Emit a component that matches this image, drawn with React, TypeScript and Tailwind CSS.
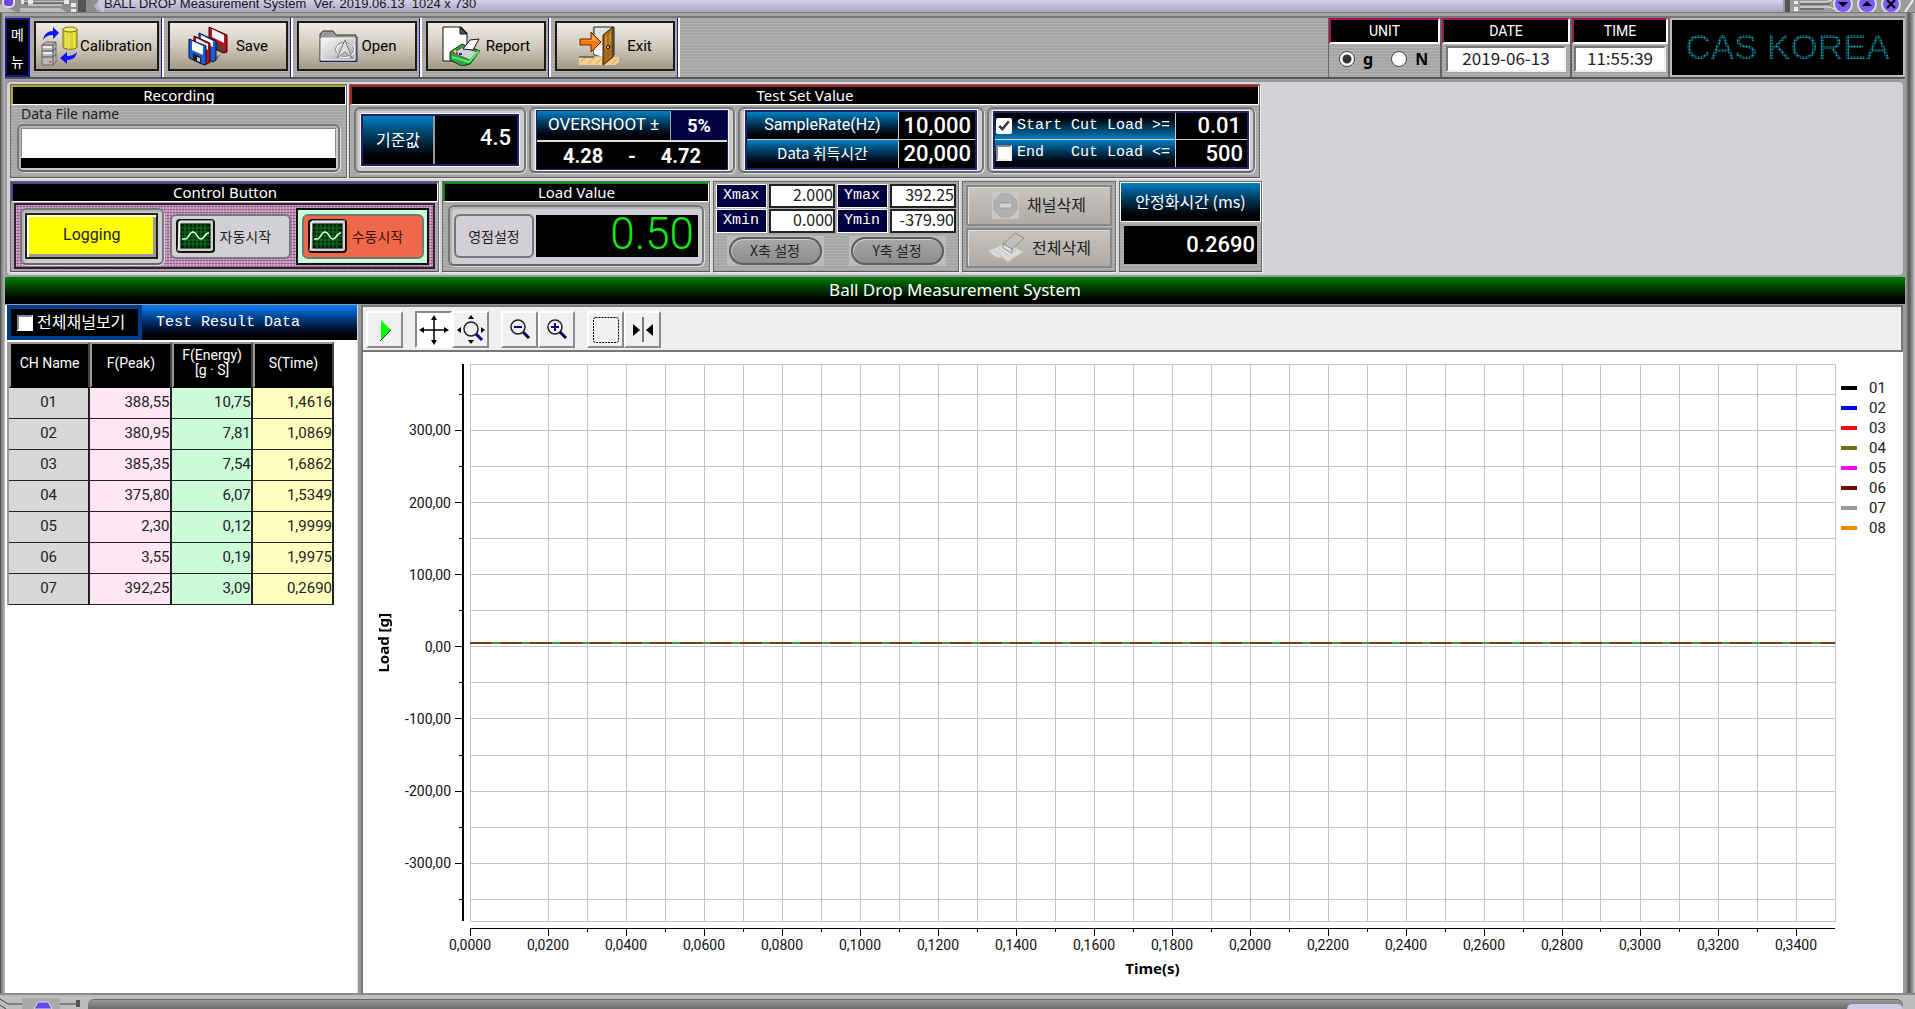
import type { ReactNode } from "react";
import clsx from "clsx";

const stripes =
  "bg-[repeating-linear-gradient(180deg,#a6a6a6_0px,#a6a6a6_2px,#b2b2b2_2px,#b2b2b2_3px)]";
const blueFade = "bg-linear-to-b from-[#0080c4] to-black";
const numberFont = "font-['Roboto','Noto_Sans_CJK_KR',sans-serif]";
const monoFont = "font-['Liberation_Mono','Noto_Sans_CJK_KR',monospace]";

const results = [
  { ch: "01", peak: "388,55", energy: "10,75", time: "1,4616" },
  { ch: "02", peak: "380,95", energy: "7,81", time: "1,0869" },
  { ch: "03", peak: "385,35", energy: "7,54", time: "1,6862" },
  { ch: "04", peak: "375,80", energy: "6,07", time: "1,5349" },
  { ch: "05", peak: "2,30", energy: "0,12", time: "1,9999" },
  { ch: "06", peak: "3,55", energy: "0,19", time: "1,9975" },
  { ch: "07", peak: "392,25", energy: "3,09", time: "0,2690" },
];

const legend = [
  { name: "01", color: "bg-black" },
  { name: "02", color: "bg-[#0000f0]" },
  { name: "03", color: "bg-[#f00c0c]" },
  { name: "04", color: "bg-[#74740c]" },
  { name: "05", color: "bg-[#f00cf0]" },
  { name: "06", color: "bg-[#780808]" },
  { name: "07", color: "bg-[#9a9a9a]" },
  { name: "08", color: "bg-[#ff840c]" },
];

/* ---------- icons ---------- */

function CalibrationIcon() {
  return (
    <svg width="38" height="40" viewBox="0 0 38 40">
      <path d="M1 19l4-3h10v20l-3 3H1z" fill="#b9b9b9" stroke="#666" />
      <path d="M1 19h11v20M12 19l3-3M1 25h11l3-3M1 31h11l3-3" fill="none" stroke="#555" />
      <path d="M2 20h9v2H2zM2 26h9v2H2z" fill="#eee" />
      <circle cx="9" cy="36" r="1" fill="#e33" />
      <path d="M22 3v18c0 3 14 3 14 0V3z" fill="#d9d22a" stroke="#77700a" />
      <path d="M25 5v17M28 5v18M33 5v17" stroke="#f8f580" />
      <ellipse cx="29" cy="3.500" rx="7" ry="2.500" fill="#f4f06a" stroke="#77700a" />
      <path d="M2 14c1-6 5-9 10-9V1l6 6-6 6V9c-4 0-7 1-10 5z" fill="#0a14ff" />
      <path d="M36 26c-1 6-5 8-10 8v4l-7-6 7-6v4c4 0 7-1 10-4z" fill="#0a14ff" />
    </svg>
  );
}

function SaveIcon() {
  return (
    <svg width="41" height="40" viewBox="0 0 41 40">
      <path d="M22 33l11-5-4 6-8 4z" fill="#555" opacity=".5" />
      <path d="M21 1l18 8v17l-4 1-14-7z" fill="#b5121b" stroke="#300" />
      <path d="M24 3l12 6v8l-12-6z" fill="#f4f4f4" />
      <path d="M28 17l7 4v5l-7-4z" fill="#444" />
      <path d="M11 7l17 8v19l-3 2-14-8z" fill="#1c5fd4" stroke="#001040" />
      <path d="M13 9l12 6v6l-12-6z" fill="#fff" />
      <path d="M6 10l16 7v19l-3 2-13-8z" fill="#b5121b" stroke="#300" />
      <path d="M8 12l12 6v6L8 18z" fill="#eee" />
      <path d="M1 13l17 7v19l-4-1L1 32z" fill="#1c5fd4" stroke="#001040" />
      <path d="M4 15l11 5v9L4 24z" fill="#fff" />
      <path d="M5 27l8 4v7l-8-4z" fill="#222" />
      <path d="M9 31l3 1v4l-3-1z" fill="#ccc" />
    </svg>
  );
}

function OpenIcon() {
  return (
    <svg width="40" height="34" viewBox="0 0 40 34">
      <defs>
        <linearGradient id="folder" x1="0" y1="0" x2="1" y2="1">
          <stop offset="0" stopColor="#fafafa" />
          <stop offset="1" stopColor="#a8a8a8" />
        </linearGradient>
      </defs>
      <path d="M2 32V5l3-3h10l3 4h20v26z" fill="#999" stroke="#333" />
      <path d="M3 9h34v22H3z" fill="url(#folder)" stroke="#f4f4f4" />
      <path d="M2 32.500h37V8" fill="none" stroke="#24247a" />
      <ellipse cx="27" cy="21" rx="9" ry="7" fill="none" stroke="#fff" strokeWidth="2" />
      <ellipse cx="26.500" cy="20.500" rx="9" ry="7" fill="none" stroke="#777" />
      <path d="M27 11l7 18-7-6-8 6z" fill="#ddd" stroke="#777" />
    </svg>
  );
}

function ReportIcon() {
  return (
    <svg width="40" height="40" viewBox="0 0 40 40">
      <path d="M1 1h18l6 6v28H1z" fill="#fff" stroke="#111" />
      <path d="M18 1v7h7z" fill="#555" stroke="#111" />
      <path d="M8 26l12-8 18 7-10 13-8 2-12-6z" fill="#37a04a" stroke="#0a3010" />
      <path d="M11 27l10-6 14 5-7 8z" fill="#cfd3cf" stroke="#555" />
      <path d="M21 23l7-9 9-1-6 11z" fill="#fff" stroke="#111" />
      <path d="M10 31l17 5 10-11" fill="none" stroke="#48f058" strokeWidth="2" />
      <path d="M14 26h2v2h-2z" fill="#e22" />
      <path d="M17 27h3v2h-3z" fill="#22e" />
      <path d="M12 24h2v2h-2z" fill="#ee2" />
    </svg>
  );
}

function ExitIcon() {
  return (
    <svg width="42" height="40" viewBox="0 0 42 40">
      <path d="M1 31h40v5l-4 3H1z" fill="#f3cf94" />
      <path d="M3 36l5-5M10 38l7-7M18 38l5-5M34 38l5-6" stroke="#d9a050" />
      <path d="M1 31h15" stroke="#222" />
      <path d="M14 1h23v30H16z" fill="#aaa" opacity=".5" />
      <path d="M16 1h20v28H16z" fill="#dfe0e0" stroke="#222" />
      <path d="M16 24l9-5v12l-9-3z" fill="#f6f6f6" />
      <path d="M25 9l10-8v30l-10 8z" fill="#a2691c" stroke="#2b1800" />
      <path d="M27 11l2-2v12l-2 2zM31 8l2-2v11l-2 2z" fill="#c98c34" />
      <circle cx="30" cy="21" r="1.500" fill="#fff" stroke="#000" />
      <path d="M2 13h11V6l10 10-10 10v-7H2z" fill="#ff7b12" stroke="#6b2500" />
      <path d="M3 14h11v-5l5 6z" fill="#ffb64a" />
    </svg>
  );
}

function ScopeIcon() {
  return (
    <svg width="40" height="34" viewBox="0 0 40 34" className="shrink-0">
      <rect x="1" y="1" width="37" height="32" rx="3" fill="#cfcfcf" stroke="#111" strokeWidth="2" />
      <path d="M2 32L4 2h33" fill="none" stroke="#fff" />
      <rect x="5" y="5" width="29" height="24" fill="#042b08" stroke="#000" />
      <path
        d="M9 5v24M13 5v24M17 5v24M21 5v24M25 5v24M29 5v24M5 9h29M5 13h29M5 17h29M5 21h29M5 25h29"
        stroke="#0a7a20"
      />
      <path d="M6 20h3c4 0 4-7 8-7s4 7 8 7 3-6 8-6" fill="none" stroke="#e8ffe8" strokeWidth="1.500" />
    </svg>
  );
}

function StopIcon() {
  return (
    <svg width="27" height="27" viewBox="0 0 27 27">
      <path d="M0 0h27v27H0z" fill="#c9c7c5" />
      <path d="M9 2h9l7 7v9l-7 7H9l-7-7V9z" fill="#b2b0ae" stroke="#a5a3a1" />
      <path d="M7 11h13v5H7z" fill="#d8d6d4" stroke="#999" />
    </svg>
  );
}

function EraserIcon() {
  return (
    <svg width="37" height="31" viewBox="0 0 37 31">
      <path d="M1 19l19-9 16 10-15 10-7-5-4 1z" fill="#dddbd9" stroke="#bbb" />
      <path d="M8 19l9 7M12 17l10 7M16 15l10 7M20 13l10 7" stroke="#b8b6b4" strokeDasharray="2 1" />
      <path d="M16 12L28 1l9 5-12 11z" fill="#c2c0be" stroke="#8f8d8b" />
      <path d="M16 12v4l9 5v-4z" fill="#e8e6e4" stroke="#8f8d8b" />
    </svg>
  );
}

function PlayIcon() {
  return (
    <svg width="28" height="28" viewBox="0 0 28 28">
      <path d="M10 4l10 10-10 10z" fill="#0f0" />
      <path d="M20 14L9 25" stroke="#033" />
    </svg>
  );
}

function PanIcon() {
  return (
    <svg width="30" height="30" viewBox="0 0 30 30">
      <path d="M15 2v26M2 15h26" stroke="#000" strokeWidth="1.500" />
      <path d="M15 0l3 5h-6zM15 30l3-5h-6zM0 15l5-3v6zM30 15l-5-3v6z" />
    </svg>
  );
}

function ZoomFitIcon() {
  return (
    <svg width="30" height="30" viewBox="0 0 30 30">
      <path d="M15 0l3 4h-6zM15 29l3-4h-6zM1 15l4-3v6zM29 15l-4-3v6z" />
      <circle cx="15" cy="14" r="7" fill="none" stroke="#222" strokeWidth="1.500" />
      <path d="M20 19l6 6" stroke="#000080" strokeWidth="3" />
    </svg>
  );
}

function MagnifierIcon({ plus = false }: { plus?: boolean }) {
  return (
    <svg width="26" height="26" viewBox="0 0 26 26">
      <circle cx="11" cy="10" r="7" fill="none" stroke="#222" strokeWidth="1.500" />
      <path d="M16 15l6 6" stroke="#000050" strokeWidth="3" />
      <path d="M7 10h8" stroke="#000090" strokeWidth="2" />
      {plus && <path d="M11 6v8" stroke="#000090" strokeWidth="2" />}
    </svg>
  );
}

function SelectAreaIcon() {
  return (
    <svg width="28" height="28" viewBox="0 0 28 28">
      <rect x="1.500" y="1.500" width="25" height="25" rx="2" fill="none" stroke="#000" strokeDasharray="2 1" />
    </svg>
  );
}

function CursorIcon() {
  return (
    <svg width="24" height="28" viewBox="0 0 24 28">
      <path d="M12 1v25" stroke="#000" />
      <path d="M2 8l7 6-7 6zM22 8l-7 6 7 6z" />
    </svg>
  );
}

/* ---------- building blocks ---------- */

function Panel({
  title,
  edge,
  className,
  children,
}: {
  title?: string;
  edge?: string;
  className?: string;
  children: ReactNode;
}) {
  return (
    <section
      className={clsx(
        "flex flex-col border border-[#6a6a6a] border-b-[#555] shadow-[1px_1px_0_#eee]",
        stripes,
        className
      )}
    >
      {title && (
        <h2
          className={clsx(
            "h-5 shrink-0 border-t-2 border-l-2 border-r border-b border-r-white border-b-white bg-black text-center font-['Noto_Sans',sans-serif] text-[15px] leading-[17px] text-white",
            edge
          )}
        >
          {title}
        </h2>
      )}
      {children}
    </section>
  );
}

function Well({ className, children }: { className?: string; children: ReactNode }) {
  return (
    <div
      className={clsx(
        "flex rounded-md border-2 border-[#777] border-b-[#666] bg-[#cfcdd1] shadow-[inset_2px_2px_0_#b4b4b4,1px_1px_0_#ddd]",
        className
      )}
    >
      {children}
    </div>
  );
}

function BigValue({ className, children }: { className?: string; children: ReactNode }) {
  return (
    <div className={clsx("flex items-center justify-end bg-black text-[22px] leading-6 font-medium text-white", numberFont, className)}>
      {children}
    </div>
  );
}

function MenuButton({ icon, label, className }: { icon: ReactNode; label: string; className?: string }) {
  return (
    <div className={clsx("flex items-start border-r-2 border-white pt-[3px] pr-[3px] pl-1 shadow-[inset_-1px_0_0_#1c1c8c]", className)}>
      <button
        type="button"
        className={clsx(
          "flex h-[50px] w-full items-center justify-center gap-1 border-2 border-[#1c1a16] bg-linear-to-b from-[#efebe4] via-[#d2cbbd] via-50% to-[#a19886] text-[15px] text-black",
          numberFont
        )}
      >
        {icon}
        <span>{label}</span>
      </button>
    </div>
  );
}

function ToolButton({ children, label, active = false, className }: { children: ReactNode; label: string; active?: boolean; className?: string }) {
  return (
    <button
      type="button"
      aria-label={label}
      className={clsx(
        "flex size-[37px] items-center justify-center border-2",
        active
          ? "border-[#8a8a8a] border-r-white border-b-white bg-white"
          : "border-white border-r-[#8a8a8a] border-b-[#8a8a8a] bg-[#f0f0f0]",
        className
      )}
    >
      {children}
    </button>
  );
}

function TitleBar() {
  return (
    <header className="relative flex h-[13px] shrink-0 justify-between overflow-hidden border-b border-[#777] bg-linear-to-b from-[#d3cfe9] to-[#aba7bb]">
      <div className="flex">
        <svg width="104" height="12" viewBox="0 0 104 12">
          <path d="M0 0h100l-6 6 4 6H0z" fill="#8d8d8d" />
          <path d="M0 12V4l16 8zM20 8h40l6 4H20z" fill="#bdbdbd" />
          <rect x="3" y="-6" width="11" height="13" rx="4" fill="#6a48e8" stroke="#ddd" strokeWidth="2" />
          <path d="M22 2h44M28 5h34" stroke="#eee" />
          <path d="M22 3h44" stroke="#444" />
          <path d="M21 0h3v4h-3zM28 0h5v4h-5zM64 0h5v4h-5zM71 3h5v4h-5zM71 9h5v3h-5z" fill="#e9e9e9" />
          <path d="M78 0h8v12h-8z" fill="#555" />
          <path d="M98 0h6v12h-3z" fill="#c9c5dd" />
        </svg>
        <h1 className="-mt-[5px] font-['Liberation_Sans',sans-serif] text-[13px] leading-[17px] whitespace-pre text-[#16161e]">
          BALL DROP Measurement System  Ver. 2019.06.13  1024 x 730
        </h1>
      </div>
      <svg width="132" height="12" viewBox="0 0 132 12">
        <path d="M0 0h132v12H0z" fill="#9c9c9c" />
        <path d="M2 0h5v12H2z" fill="#555" />
        <path d="M11 1h4v3h-4zM11 7h4v4h-4z" fill="#eee" />
        <path d="M17 2h26l6-2M17 7h30l6 3" fill="none" stroke="#eee" />
        <path d="M17 4h30M17 9h24" stroke="#444" />
        <circle cx="60" cy="4" r="9" fill="#7c5cf4" stroke="#ddd" strokeWidth="2" />
        <circle cx="84" cy="4" r="9" fill="#7c5cf4" stroke="#ddd" strokeWidth="2" />
        <circle cx="108" cy="4" r="9" fill="#7c5cf4" stroke="#ddd" strokeWidth="2" />
        <path d="M55 2h10l-5 5zM79 6h10l-5-5z" fill="#000" />
        <path d="M104 0l8 8M112 0l-8 8" stroke="#000" strokeWidth="2" />
        <path d="M122 12l8-12" stroke="#eee" strokeWidth="2" />
      </svg>
    </header>
  );
}

function StatusCell({ title, className, children }: { title: string; className?: string; children: ReactNode }) {
  return (
    <div className={clsx("flex flex-col border-r-2 border-[#666]", className)}>
      <h2 className={clsx("h-[26px] border-2 border-[#a8145c] border-r-white border-b-white bg-black text-center text-sm leading-[22px] text-white", numberFont)}>
        {title}
      </h2>
      {children}
    </div>
  );
}

function TopBar() {
  return (
    <div className={clsx("mt-[3px] flex h-[63px] shrink-0 border-y-2 border-[#555] border-t-[#777]", stripes)}>
      <div className="flex w-[25px] flex-col items-center justify-around border-2 border-[#14148c] bg-black text-sm leading-4 text-white">
        <span>메</span>
        <span>뉴</span>
      </div>
      <MenuButton icon={<CalibrationIcon />} label="Calibration" className="w-[134px] [&_span]:-ml-[3px]" />
      <MenuButton icon={<SaveIcon />} label="Save" className="w-[129px] [&_span]:ml-[3px]" />
      <MenuButton icon={<OpenIcon />} label="Open" className="w-[129px]" />
      <MenuButton icon={<ReportIcon />} label="Report" className="w-[129px]" />
      <MenuButton icon={<ExitIcon />} label="Exit" className="w-[129px] [&_span]:ml-[3px]" />
      <div className="ml-auto flex border-l border-[#666]">
        <StatusCell title="UNIT" className="w-[113px]">
          <div className="flex flex-1 items-center gap-[18px] pb-1 pl-[10px] font-['Noto_Sans',sans-serif] text-base font-bold">
            {["g", "N"].map((unit) => (
              <label key={unit} className="flex items-center gap-2">
                <input
                  type="radio"
                  name="unit"
                  defaultChecked={unit === "g"}
                  className="size-4 appearance-none rounded-full border border-[#444] bg-white checked:bg-[radial-gradient(#333_0,#333_4px,#fff_5px)]"
                />
                {unit}
              </label>
            ))}
          </div>
        </StatusCell>
        <StatusCell title="DATE" className="w-[130px]">
          <input
            aria-label="Date"
            readOnly
            defaultValue="2019-06-13"
            className="mx-1 mt-[2px] h-[26px] w-auto min-w-0 border-2 border-[#777] border-r-[#eee] border-b-[#eee] bg-white pb-1 text-center text-[17px] text-[#222]"
          />
        </StatusCell>
        <StatusCell title="TIME" className="w-[98px]">
          <input
            aria-label="Time"
            readOnly
            defaultValue="11:55:39"
            className="mx-[2px] mt-[2px] h-[26px] w-auto min-w-0 border-2 border-[#777] border-r-[#eee] border-b-[#eee] bg-white pb-1 text-center text-[17px] text-[#222]"
          />
        </StatusCell>
        <div className="flex w-[235px] items-center justify-center border-2 border-[#bbb] bg-black pb-[2px]">
          <span className="bg-[radial-gradient(circle,#18a0a0_25%,#023_70%)] bg-[length:3px_3px] bg-clip-text font-['Liberation_Sans',sans-serif] text-[35px] leading-10 text-transparent">
            CAS KOREA
          </span>
        </div>
      </div>
    </div>
  );
}

function RecordingPanel() {
  return (
    <Panel title="Recording" edge="border-[#b4ac14]" className="w-[337px]">
      <label htmlFor="file" className="h-[19px] pl-[10px] font-['Noto_Sans',sans-serif] text-sm leading-[18px] text-[#222]">
        Data File name
      </label>
      <Well className="mx-[6px] h-[48px] flex-col p-[2px]">
        <input id="file" className="h-[30px] w-full border border-[#888] border-b-2 border-b-white bg-white px-1 text-sm" />
        <div className="h-[10px] bg-black" />
      </Well>
    </Panel>
  );
}

function TestSetPanel() {
  return (
    <Panel title="Test Set Value" edge="border-[#b01c1c]" className="w-[911px]">
      <div className="flex gap-[3px] px-1 pt-[2px]">
        <Well className="h-[66px] w-[172px]">
          <div className="m-auto flex h-[52px] w-[158px] border-2 border-[#20206c] shadow-[0_0_0_1px_#f4f4f4]">
            <div className={clsx("flex w-[72px] items-center justify-center border-r-2 border-[#999] pb-[2px] text-base text-white", blueFade)}>
              기준값
            </div>
            <BigValue className="flex-1 pr-[6px] pb-1">4.5</BigValue>
          </div>
        </Well>
        <Well className="h-[66px] w-[206px]">
          <div className={clsx("m-auto flex h-[60px] w-[192px] flex-col border border-[#20206c] shadow-[0_0_0_1px_#f4f4f4]", numberFont)}>
            <div className="flex h-[31px] border-b-2 border-[#ddd]">
              <div className={clsx("flex w-[134px] items-center justify-center border-r border-[#aaa] pb-[2px] text-[17px] text-white", blueFade)}>
                OVERSHOOT ±
              </div>
              <div className="flex flex-1 items-center justify-center bg-[#000040] text-lg font-bold text-white">5%</div>
            </div>
            <div className="flex flex-1 items-center justify-between bg-black px-[26px] text-xl leading-6 font-bold text-white">
              <span>4.28</span>
              <span>-</span>
              <span>4.72</span>
            </div>
          </div>
        </Well>
        <Well className="h-[66px] w-[246px]">
          <div className="m-auto grid h-[60px] w-[232px] grid-cols-[1fr_77px] grid-rows-2 border-2 border-[#20206c] shadow-[0_0_0_1px_#f4f4f4]">
            <div className={clsx("flex items-center justify-center border-b border-[#ccc] pb-[2px] text-base leading-6 text-white", blueFade, numberFont)}>
              SampleRate(Hz)
            </div>
            <BigValue className="border-b border-l border-[#ccc] pr-1">10,000</BigValue>
            <div className={clsx("flex items-center justify-center pb-[2px] text-[15px] leading-6 text-white", blueFade)}>Data 취득시간</div>
            <BigValue className="border-l border-[#ccc] pr-1">20,000</BigValue>
          </div>
        </Well>
        <Well className="h-[66px] w-[268px]">
          <div className="m-auto grid h-[58px] w-[256px] grid-cols-[1fr_72px] grid-rows-2 border-2 border-[#20206c] shadow-[0_0_0_1px_#f4f4f4]">
            <label className={clsx("flex items-center gap-[5px] border-b border-[#ccc] bg-linear-to-b from-black to-[#0080c4] text-[15px] leading-6 whitespace-pre text-white", monoFont)}>
              <input type="checkbox" defaultChecked className="ml-px size-4 rounded-none border-2 border-[#888] bg-white accent-white" />
              Start Cut Load &gt;=
            </label>
            <BigValue className="border-b border-l border-[#ccc] pr-[6px]">0.01</BigValue>
            <label className={clsx("flex items-center gap-[5px] pb-[2px] text-[15px] leading-6 whitespace-pre text-white", blueFade, monoFont)}>
              <input type="checkbox" className="ml-px size-4 appearance-none border-2 border-[#888] border-r-[#eee] border-b-[#eee] bg-white" />
              End   Cut Load &lt;=
            </label>
            <BigValue className="border-l border-[#ccc] pr-1">500</BigValue>
          </div>
        </Well>
      </div>
    </Panel>
  );
}

function ControlPanel() {
  return (
    <Panel title="Control Button" edge="border-[#54468c]" className="w-[429px]">
      <div className="mx-[3px] mt-px flex h-[66px] items-center border-2 border-[#3a1c34] bg-[#c488b8] bg-[repeating-linear-gradient(0deg,#0004_0px,#0004_1px,transparent_1px,transparent_3px),repeating-linear-gradient(90deg,#fff5_0px,#fff5_1px,transparent_1px,transparent_3px)] px-1">
        <Well className="h-[57px] w-[145px]">
          <button
            type="button"
            className={clsx("m-auto h-[46px] w-[133px] border-2 border-[#222] bg-[#ff0] pb-[2px] text-base text-[#222] shadow-[inset_2px_2px_0_#ffd,inset_-3px_-3px_0_#999]", numberFont)}
          >
            Logging
          </button>
        </Well>
        <button
          type="button"
          className="ml-[6px] flex h-[45px] w-[123px] items-center gap-1 rounded-md border-2 border-[#777] bg-[#d2d0d4] pl-1 text-sm whitespace-nowrap text-[#222]"
        >
          <ScopeIcon />
          자동시작
        </button>
        <div className="ml-[5px] flex h-[57px] w-[134px] items-center justify-center border-2 border-[#111] bg-[#c8ffd8]">
          <button
            type="button"
            className="flex h-[45px] w-[122px] items-center gap-1 rounded-md border-2 border-[#777] bg-[#f0684a] pl-1 text-sm whitespace-nowrap text-[#3a1008]"
          >
            <ScopeIcon />
            수동시작
          </button>
        </div>
      </div>
    </Panel>
  );
}

function LoadPanel() {
  return (
    <Panel title="Load Value" edge="border-[#148c14]" className="w-[268px]">
      <Well className="mx-[5px] mt-[3px] h-[61px] items-center gap-[2px] px-1">
        <button type="button" className="h-[44px] w-20 rounded-md border-2 border-[#777] bg-[#d2d0d4] text-sm text-[#222]">
          영점설정
        </button>
        <output className="flex h-[42px] flex-1 items-center justify-end bg-black pr-1 pb-1 font-['Roboto',sans-serif] text-[44px] leading-[38px] font-light text-[#14e814]">
          0.50
        </output>
      </Well>
    </Panel>
  );
}

function AxisField({ label, value }: { label: string; value: string }) {
  return (
    <>
      <label htmlFor={label} className={clsx("border border-white bg-[#000040] pl-[6px] text-[15px] leading-[21px] text-white", monoFont)}>
        {label}
      </label>
      <input
        id={label}
        defaultValue={value}
        className="h-6 w-full min-w-0 border-2 border-[#222] bg-white pb-1 text-right text-base text-[#222]"
      />
    </>
  );
}

function AxisPanel() {
  return (
    <Panel className="w-[246px]">
      <div className="grid grid-cols-[51px_1fr_51px_1fr] gap-x-[2px] gap-y-px p-[2px]">
        <AxisField label="Xmax" value="2.000" />
        <AxisField label="Ymax" value="392.25" />
        <AxisField label="Xmin" value="0.000" />
        <AxisField label="Ymin" value="-379.90" />
      </div>
      <div className="flex justify-around pt-px">
        {["X축 설정", "Y축 설정"].map((text) => (
          <div key={text} className="bg-[#bcbcbc] px-[2px] py-px">
            <button
              type="button"
              className="h-7 w-[93px] rounded-full border-2 border-[#5c5c5c] bg-linear-to-b from-[#a8a8a8] to-[#8c8c8c] pb-[2px] text-sm leading-5 text-[#222] shadow-[inset_1px_1px_0_#ccc]"
            >
              {text}
            </button>
          </div>
        ))}
      </div>
    </Panel>
  );
}

function DeletePanel() {
  return (
    <Panel className="w-[154px] gap-[2px] p-[3px]">
      {[
        { text: "채널삭제", icon: <StopIcon /> },
        { text: "전체삭제", icon: <EraserIcon /> },
      ].map((item) => (
        <button
          key={item.text}
          type="button"
          className="flex flex-1 items-center justify-center gap-2 border-2 border-[#8a8886] bg-linear-to-b from-[#c8c4c0] to-[#aeaaa6] text-base text-[#222] shadow-[inset_1px_1px_0_#ddd]"
        >
          {item.icon}
          <span className="pb-[2px]">{item.text}</span>
        </button>
      ))}
    </Panel>
  );
}

function StabilityPanel() {
  return (
    <Panel className="w-[143px]">
      <div className={clsx("flex h-10 items-center justify-center border border-white pb-[2px] text-base whitespace-nowrap text-white", blueFade)}>
        안정화시간 (ms)
      </div>
      <BigValue className="mx-1 mt-1 h-[38px] pr-[2px]">0.2690</BigValue>
    </Panel>
  );
}

function ResultTable() {
  return (
    <aside className="flex w-[353px] shrink-0 flex-col border-r border-[#ddd] bg-white pl-[2px]">
      <div className="flex h-[35px] items-stretch bg-linear-to-b from-[#0080ff] to-black">
        <label className="flex w-[135px] items-center gap-1 border-4 border-[#003c8c] bg-black pb-1 pl-[6px] text-base whitespace-nowrap text-white">
          <input type="checkbox" className="mt-1 size-4 appearance-none border-2 border-[#888] border-r-white border-b-white bg-white" />
          전체채널보기
        </label>
        <h2 className={clsx("pl-[14px] text-[15px] leading-[35px] text-white", monoFont)}>Test Result Data</h2>
      </div>
      <table className={clsx("mt-[2px] w-[327px] table-fixed border-separate border-spacing-0 border-l-2 border-[#999] text-[15px] text-[#222]", numberFont)}>
        <thead>
          <tr className="h-[46px] bg-black text-white">
            {["CH Name", "F(Peak)", "F(Energy) [g · S]", "S(Time)"].map((head) => (
              <th key={head} className="border-2 border-[#999] border-r-[#444] border-b-black px-1 pb-1 text-sm leading-[15px] font-normal">
                {head}
              </th>
            ))}
          </tr>
        </thead>
        <tbody>
          {results.map((row) => (
            <tr key={row.ch} className="h-[31px] [&>td]:border-r-2 [&>td]:border-b [&>td]:border-[#222] [&>td]:p-0 [&>td]:pb-[2px] [&>td]:leading-6">
              <td className="bg-[#d8d8d8] text-center">{row.ch}</td>
              <td className="bg-[#ffe6f4] text-right">{row.peak}</td>
              <td className="bg-[#ccfcd8] text-right">{row.energy}</td>
              <td className="bg-[#ffffc0] text-right">{row.time}</td>
            </tr>
          ))}
        </tbody>
      </table>
    </aside>
  );
}

const X_MAX = 0.35;
const Y_TOP = 392;
const Y_SPAN = 772;
const xPos = (v: number) => `${(v / X_MAX) * 100}%`;
const yPos = (v: number) => `${((Y_TOP - v) / Y_SPAN) * 100}%`;
const tickLabel = (v: number, digits: number) => v.toFixed(digits).replace(".", ",");

function Plot() {
  const xs = Array.from({ length: 35 }, (_, i) => i / 100);
  const ys = Array.from({ length: 15 }, (_, i) => 350 - i * 50);

  return (
    <svg className={clsx("h-full w-full overflow-visible", numberFont)} fontSize="14" fill="#111">
      <g stroke="#c4c4c4" shapeRendering="crispEdges">
        <rect width="100%" height="100%" fill="#fff" />
        {xs.map((x) => (
          <line key={x} x1={xPos(x)} x2={xPos(x)} y1="0" y2="100%" />
        ))}
        {ys.map((y) => (
          <line key={y} x1="0" x2="100%" y1={yPos(y)} y2={yPos(y)} />
        ))}
      </g>

      {/* y axis */}
      <svg x="-7" overflow="visible">
        <line y1="0" y2="100%" stroke="#000" strokeWidth="2" shapeRendering="crispEdges" />
        {ys.map((y) => (
          <line key={y} x1={y % 100 === 0 ? -8 : -4} x2="0" y1={yPos(y)} y2={yPos(y)} stroke="#000" shapeRendering="crispEdges" />
        ))}
        {ys
          .filter((y) => y % 100 === 0)
          .map((y) => (
            <text key={y} x="-12" y={yPos(y)} dy="5" textAnchor="end">
              {tickLabel(y, 2)}
            </text>
          ))}
      </svg>

      {/* x axis */}
      <svg y="100%" overflow="visible">
        <line x1="0" x2="100%" y1="7" y2="7" stroke="#000" shapeRendering="crispEdges" />
        {xs.map((x, i) => (
          <g key={x}>
            <line x1={xPos(x)} x2={xPos(x)} y1="7" y2={i % 2 === 0 ? 15 : 11} stroke="#000" shapeRendering="crispEdges" />
            {i % 2 === 0 && (
              <text x={xPos(x)} y="29" textAnchor="middle">
                {tickLabel(x, 4)}
              </text>
            )}
          </g>
        ))}
      </svg>

      <line x1="0" x2="100%" y1={yPos(6)} y2={yPos(6)} stroke="#3c9c50" strokeWidth="2" shapeRendering="crispEdges" />
      <line x1="0" x2="100%" y1={yPos(5)} y2={yPos(5)} stroke="#7c3c10" strokeWidth="2" strokeDasharray="22 8" shapeRendering="crispEdges" />
    </svg>
  );
}

function ChartPanel() {
  return (
    <main className="flex min-w-0 flex-1 flex-col border-t-2 border-l-2 border-[#777] bg-white">
      <div className="flex h-[45px] shrink-0 items-center border-r-2 border-b-2 border-[#777] bg-[#efefef] pt-[2px] pl-[3px]">
        <ToolButton label="Run">
          <PlayIcon />
        </ToolButton>
        <ToolButton label="Scroll" active className="ml-3">
          <PanIcon />
        </ToolButton>
        <ToolButton label="Zoom to fit">
          <ZoomFitIcon />
        </ToolButton>
        <ToolButton label="Zoom out" className="ml-3">
          <MagnifierIcon />
        </ToolButton>
        <ToolButton label="Zoom in">
          <MagnifierIcon plus />
        </ToolButton>
        <ToolButton label="Zoom area" className="ml-3">
          <SelectAreaIcon />
        </ToolButton>
        <ToolButton label="Cursor">
          <CursorIcon />
        </ToolButton>
      </div>
      <div className="flex min-h-0 flex-1 pt-3">
        <div className="flex w-[107px] items-center pb-[72px] pl-[10px]">
          <span className="rotate-180 font-['Noto_Sans',sans-serif] text-[15px] leading-5 font-bold [writing-mode:vertical-rl]">Load [g]</span>
        </div>
        <div className="flex min-w-0 flex-1 flex-col">
          <div className="min-h-0 flex-1">
            <Plot />
          </div>
          <div className="h-[72px] pt-[37px] text-center font-['Noto_Sans',sans-serif] text-[15px] leading-5 font-bold">Time(s)</div>
        </div>
        <ul className={clsx("w-[68px] pt-[14px] pl-[6px] text-[15px] leading-5 text-[#222]", numberFont)}>
          {legend.map((item) => (
            <li key={item.name} className="flex items-center gap-3">
              <span className={clsx("h-1 w-4", item.color)} />
              {item.name}
            </li>
          ))}
        </ul>
      </div>
    </main>
  );
}

export default function App() {
  return (
    <div className="flex h-screen flex-col overflow-hidden bg-[#a4a4a4] font-['Noto_Sans_CJK_KR',sans-serif]">
      <TitleBar />
      <div className="flex min-h-0 flex-1">
        <div className="w-[5px] shrink-0 border-l border-[#555] bg-linear-to-r from-[#777] to-[#bbb]" />
        <div className="flex min-w-0 flex-1 flex-col">
          <TopBar />
          <div className="mt-px flex flex-col gap-[3px] rounded-md border-2 border-[#999] bg-[#d4d2d6] px-[3px] pt-[2px] pb-[3px]">
            <div className="flex h-[94px] gap-[2px]">
              <RecordingPanel />
              <TestSetPanel />
            </div>
            <div className="flex h-[91px] gap-[3px]">
              <ControlPanel />
              <LoadPanel />
              <AxisPanel />
              <DeletePanel />
              <StabilityPanel />
            </div>
          </div>
          <div className="h-[27px] shrink-0 bg-linear-to-b from-[#008000] to-black text-center font-['Noto_Sans',sans-serif] text-[17px] leading-[26px] text-white">
            Ball Drop Measurement System
          </div>
          <div className="flex min-h-0 flex-1 gap-[3px] bg-[#999] pt-px pr-[2px]">
            <ResultTable />
            <ChartPanel />
          </div>
        </div>
        <div className="w-[10px] shrink-0 bg-linear-to-r from-[#aaa] via-[#555] via-40% to-[#ccc]" />
      </div>
      <footer className="flex h-4 shrink-0 items-end border-t-2 border-[#8a8a8a] bg-[#bdbdbd]">
        <svg width="88" height="12" viewBox="0 0 88 12">
          <path d="M0 2l8 5h70M0 8l6 4" fill="none" stroke="#444" />
          <path d="M22 1h38v11H22z" fill="#a9a9a9" />
          <path d="M38 5h10l4 7H34z" fill="#6a48e8" stroke="#ddd" />
          <path d="M76 3h4v7h-4z" fill="#555" />
        </svg>
        <div className="flex h-[10px] flex-1 items-end justify-end rounded-t-md border-t border-[#666] bg-linear-to-b from-[#999] to-[#6c6c6c]">
          <div className="h-[5px] w-14 rounded-t-md bg-[#cfcbe6]" />
        </div>
        <div className="w-3" />
      </footer>
    </div>
  );
}
